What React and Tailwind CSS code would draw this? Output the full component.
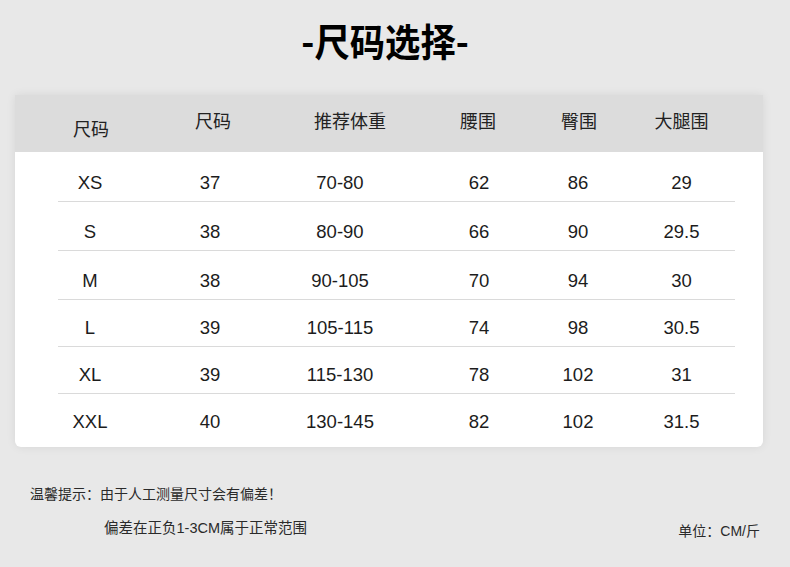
import React from "react";

const rows = [
  ["XS", "37", "70-80", "62", "86", "29"],
  ["S", "38", "80-90", "66", "90", "29.5"],
  ["M", "38", "90-105", "70", "94", "30"],
  ["L", "39", "105-115", "74", "98", "30.5"],
  ["XL", "39", "115-130", "78", "102", "31"],
  ["XXL", "40", "130-145", "82", "102", "31.5"],
];

const font = { fontFamily: '"Liberation Sans", "Noto Sans CJK SC", sans-serif' };

export default function App() {
  return (
    <div
      className="w-[790px] h-[567px] bg-[#e8e8e8] flex flex-col overflow-hidden text-[#1c1c1c]"
      style={font}
    >
      <div className="h-[95px] flex justify-center pt-[20px] pr-[20px]">
        <div
          className="text-[38px] leading-[40px] font-bold text-black scale-x-[0.93]"
          style={{ fontFamily: '"Noto Sans CJK SC", sans-serif' }}
        >
          -尺码选择-
        </div>
      </div>

      <div className="ml-[15px] w-[748px] h-[352px] bg-white rounded-b-[6px] shadow-[0_0_10px_rgba(0,0,0,0.08)] flex flex-col">
        <div className="h-[57px] bg-[#dcdcdc] flex items-center">
          <div
            className="ml-[43px] grid grid-cols-[92px_125px_134px_119px_100px_107px] text-[18px] leading-[24px] text-[#222]"
            style={{ fontFamily: '"Noto Sans CJK SC", sans-serif' }}
          >
            <div className="text-center pr-[26px] pt-[8px]">尺码</div>
            <div className="text-center pl-[1px]">尺码</div>
            <div className="text-center pl-[16px]">推荐体重</div>
            <div className="text-center pl-[19px]">腰围</div>
            <div className="text-center pl-[2px]">臀围</div>
            <div className="text-center">大腿围</div>
          </div>
        </div>
        <div className="pt-[1px]">
          {rows.map((r, i) => (
            <div
              key={i}
              className={`ml-[43px] w-[677px] ${i < 3 ? "h-[49px] pt-[11px]" : "h-[47px] pt-[9px]"} flex items-center ${
                i < rows.length - 1 ? "border-b border-[#dadada]" : ""
              }`}
            >
              <div className="grid grid-cols-[92px_125px_134px_119px_100px_107px] text-[18.5px] leading-[22px]">
                <div className="text-center pr-[28px]">{r[0]}</div>
                <div className="text-center pr-[5px]">{r[1]}</div>
                <div className="text-center pr-[4px]">{r[2]}</div>
                <div className="text-center pl-[21px]">{r[3]}</div>
                <div className="text-center">{r[4]}</div>
                <div className="text-center">{r[5]}</div>
              </div>
            </div>
          ))}
        </div>
      </div>

      <div className="mt-[37px] ml-[30px] text-[14px] leading-[20px] text-[#2a2a2a]">
        温馨提示：由于人工测量尺寸会有偏差！
      </div>
      <div className="mt-[14px] flex justify-between items-start text-[14px] leading-[20px] text-[#2a2a2a]">
        <div className="pl-[104px] text-[14.5px]">偏差在正负1-3CM属于正常范围</div>
        <div className="pr-[30px] pt-[3px]">单位：CM/斤</div>
      </div>
    </div>
  );
}
